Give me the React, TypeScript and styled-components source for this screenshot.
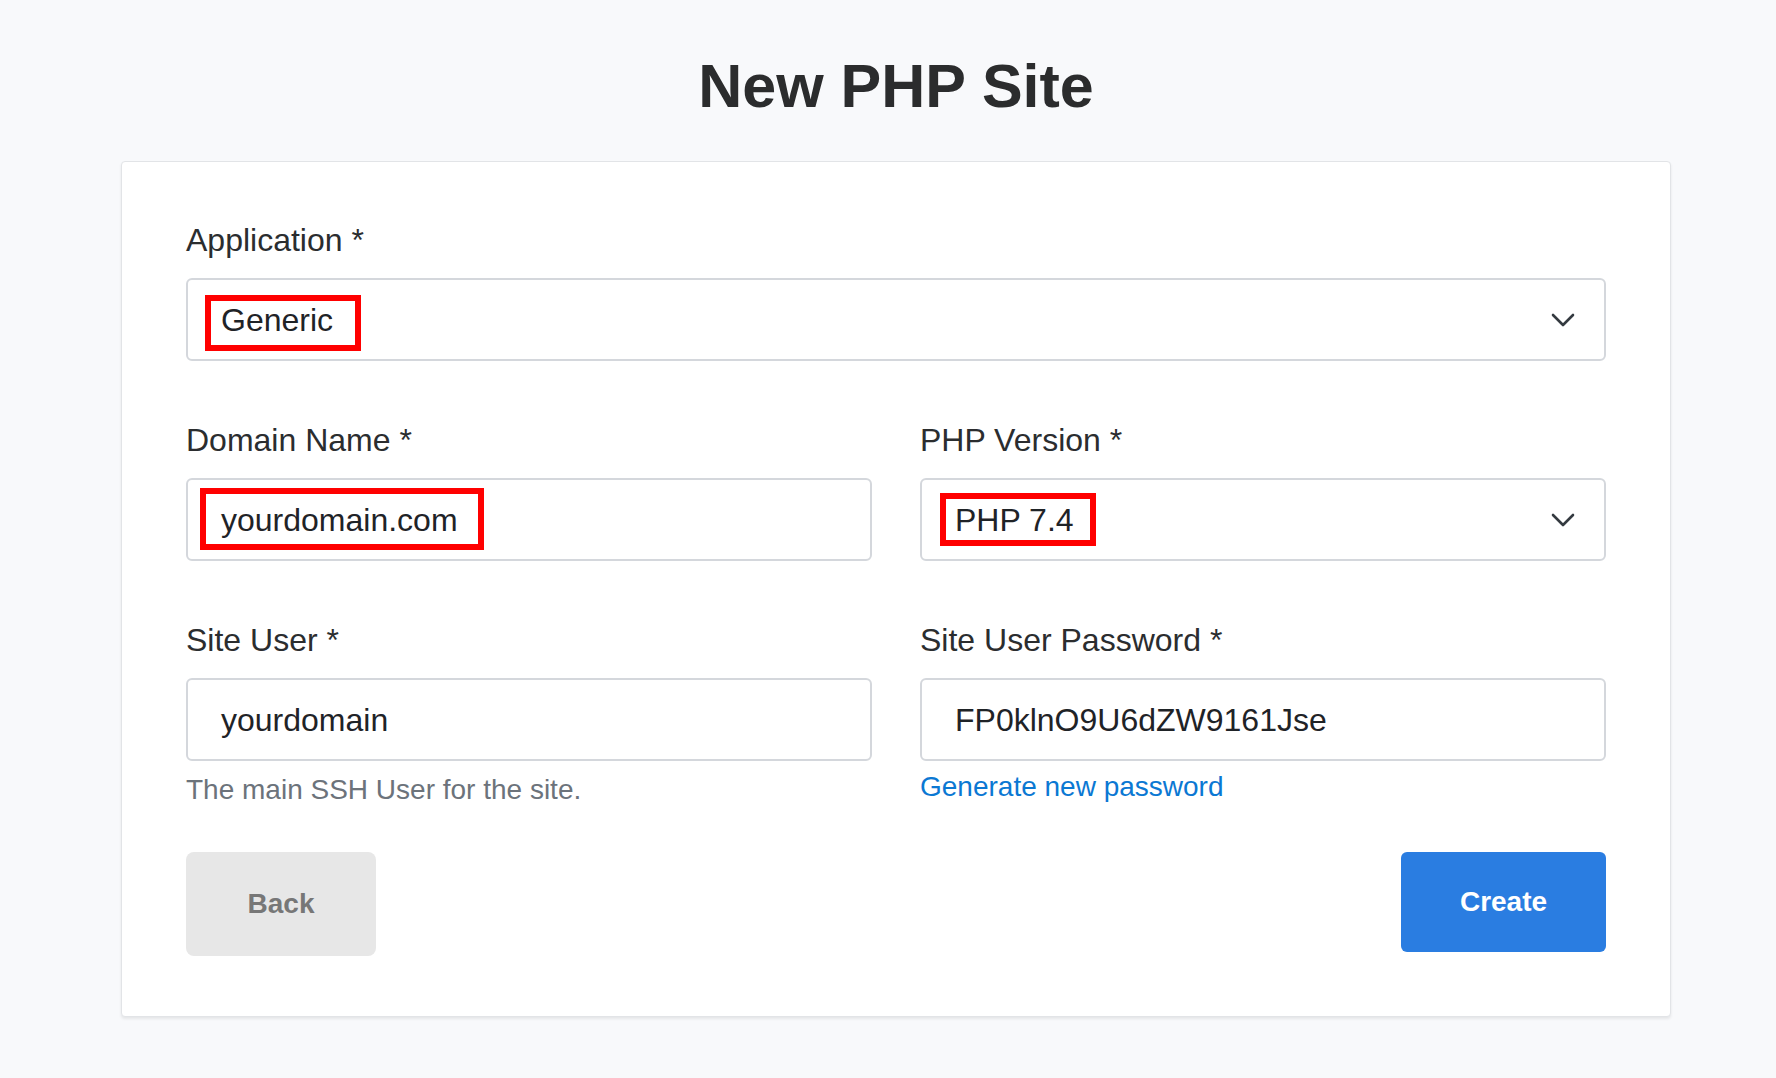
import React from "react";
import styled, { createGlobalStyle } from "styled-components";

const GlobalStyle = createGlobalStyle`
  html, body {
    margin: 0;
    padding: 0;
    background: #f8f9fb;
  }
  body {
    font-family: "Liberation Sans", Arial, Helvetica, sans-serif;
    color: #2d2f31;
  }
`;

const Page = styled.div`
  min-height: 1078px;
  box-sizing: border-box;
  padding: 50px 0 0 121px;
`;

const Container = styled.div`
  width: 1550px;
`;

const Title = styled.h1`
  margin: 0 0 39px;
  text-align: center;
  font-size: 61px;
  line-height: 72px;
  font-weight: 700;
  color: #2b2c2d;
`;

const Card = styled.div`
  box-sizing: border-box;
  width: 100%;
  background: #fff;
  border: 1px solid #e2e4e7;
  border-radius: 4px;
  box-shadow: 0 2px 3px rgba(0, 0, 0, 0.08);
  padding: 58px 64px 60px;
`;

const FieldsGrid = styled.div`
  display: grid;
  grid-template-columns: 1fr 1fr;
  column-gap: 48px;
  row-gap: 59px;
`;

const Field = styled.div<{ $wide?: boolean }>`
  display: flex;
  flex-direction: column;
  grid-column: ${(p) => (p.$wide ? "1 / -1" : "auto")};
`;

const Label = styled.label`
  font-size: 32px;
  line-height: 40px;
  color: #2b2d2f;
  margin-bottom: 18px;
`;

const InputBox = styled.div`
  box-sizing: border-box;
  height: 83px;
  border: 2px solid #d4d7dc;
  border-radius: 6px;
  background: #fff;
  display: flex;
  align-items: center;
  justify-content: space-between;
  padding: 0 29px 0 33px;
  font-size: 32px;
  color: #1f2327;
`;

const Value = styled.span`
  display: inline-block;
  line-height: 36px;
  white-space: nowrap;
`;

const Marked = styled(Value)<{ $t: number; $r: number; $b: number; $l: number }>`
  position: relative;
  &::after {
    content: "";
    position: absolute;
    top: ${(p) => p.$t}px;
    right: ${(p) => p.$r}px;
    bottom: ${(p) => p.$b}px;
    left: ${(p) => p.$l}px;
    border: 6px solid #ff0000;
    pointer-events: none;
  }
`;

const Chevron = styled.svg`
  width: 24px;
  height: 14px;
  flex: none;
`;

const Help = styled.div`
  margin-top: 11px;
  font-size: 28px;
  line-height: 36px;
  color: #6c737b;
`;

const Link = styled.a`
  margin-top: 8px;
  font-size: 28px;
  line-height: 36px;
  color: #0b78d3;
  text-decoration: none;
  cursor: pointer;
`;

const Actions = styled.div`
  margin-top: 44px;
  display: flex;
  justify-content: space-between;
  align-items: flex-start;
`;

const Button = styled.button<{ $primary?: boolean }>`
  box-sizing: border-box;
  border: none;
  font-family: "Liberation Sans", Arial, Helvetica, sans-serif;
  font-size: 28px;
  font-weight: 700;
  cursor: pointer;
  width: ${(p) => (p.$primary ? "205px" : "190px")};
  height: ${(p) => (p.$primary ? "100px" : "104px")};
  border-radius: ${(p) => (p.$primary ? "6px" : "8px")};
  background: ${(p) => (p.$primary ? "#2a7de1" : "#e7e7e7")};
  color: ${(p) => (p.$primary ? "#ffffff" : "#777777")};
`;

function ChevronDown() {
  return (
    <Chevron viewBox="0 0 24 14">
      <polyline
        points="2,2 12,12 22,2"
        fill="none"
        stroke="#343a40"
        strokeWidth="2.6"
        strokeLinecap="round"
        strokeLinejoin="round"
      />
    </Chevron>
  );
}

export default function App() {
  return (
    <>
      <GlobalStyle />
      <Page>
        <Container>
          <Title>New PHP Site</Title>
          <Card>
            <FieldsGrid>
              <Field $wide>
                <Label>Application *</Label>
                <InputBox>
                  <Marked $t={-7} $r={-28} $b={-13} $l={-16}>
                    Generic
                  </Marked>
                  <ChevronDown />
                </InputBox>
              </Field>

              <Field>
                <Label>Domain Name *</Label>
                <InputBox>
                  <Marked $t={-14} $r={-26} $b={-12} $l={-21}>
                    yourdomain.com
                  </Marked>
                </InputBox>
              </Field>

              <Field>
                <Label>PHP Version *</Label>
                <InputBox>
                  <Marked $t={-9} $r={-22} $b={-8} $l={-15}>
                    PHP 7.4
                  </Marked>
                  <ChevronDown />
                </InputBox>
              </Field>

              <Field>
                <Label>Site User *</Label>
                <InputBox>
                  <Value>yourdomain</Value>
                </InputBox>
                <Help>The main SSH User for the site.</Help>
              </Field>

              <Field>
                <Label>Site User Password *</Label>
                <InputBox>
                  <Value>FP0klnO9U6dZW9161Jse</Value>
                </InputBox>
                <Link>Generate new password</Link>
              </Field>
            </FieldsGrid>

            <Actions>
              <Button>Back</Button>
              <Button $primary>Create</Button>
            </Actions>
          </Card>
        </Container>
      </Page>
    </>
  );
}
